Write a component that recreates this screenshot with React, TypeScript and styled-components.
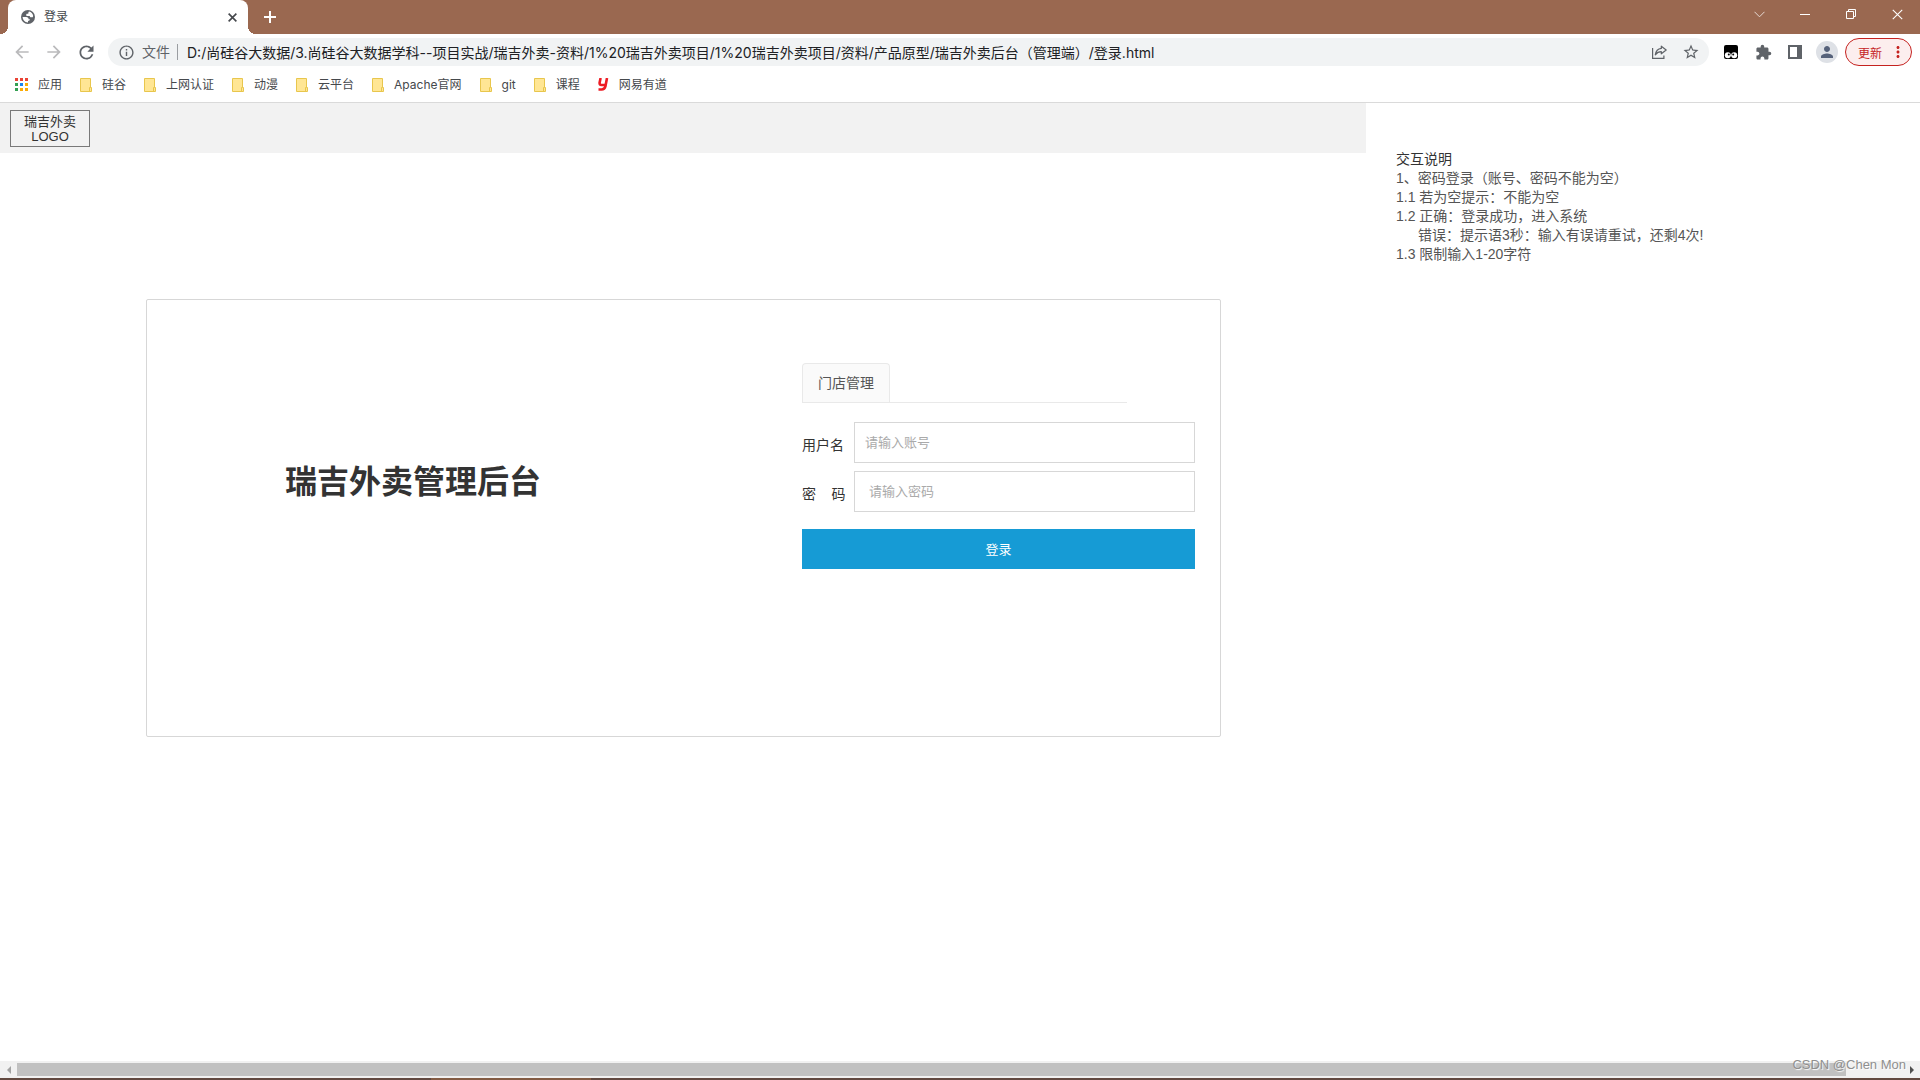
import React from "react";
import styled, { createGlobalStyle } from "styled-components";
import { MdArrowBack, MdArrowForward, MdRefresh, MdStarBorder, MdExtension, MdPerson, MdInfoOutline, MdMoreVert } from "react-icons/md";

const UI_FONT = 'Inter, "Noto Sans CJK SC", sans-serif';
const PAGE_FONT = '"Liberation Sans", "Noto Sans CJK SC", sans-serif';

const GlobalStyle = createGlobalStyle`
  *, *::before, *::after { box-sizing: border-box; }
  body { margin: 0; background: #fff; font-family: ${UI_FONT}; overflow: hidden; }
  button, input { font: inherit; color: inherit; }
  button { border: 0; padding: 0; background: none; cursor: pointer; }
  p, h1, h2 { margin: 0; }
`;

const Browser = styled.div`
  display: flex;
  flex-direction: column;
  min-height: 100vh;
`;

const TitleBar = styled.header`
  display: flex;
  height: 34px;
  background: #9a6850;
`;

const Tab = styled.div`
  position: relative;
  display: flex;
  align-items: center;
  gap: 8px;
  width: 240px;
  height: 34px;
  margin-left: 8px;
  padding: 0 8px 0 12px;
  border-radius: 8px 8px 0 0;
  background: #fff;
  color: #45484c;
  font-size: 12px;

  &::before, &::after {
    content: "";
    position: absolute;
    bottom: 0;
    width: 8px;
    height: 8px;
  }
  &::before {
    left: -8px;
    background: radial-gradient(circle at 0 0, transparent 8px, #fff 8px);
  }
  &::after {
    right: -8px;
    background: radial-gradient(circle at 100% 0, transparent 8px, #fff 8px);
  }
`;

const TabTitle = styled.span`
  flex: 1;
  line-height: 18px;
`;

const IconButton = styled.button<{ $width?: number; $color?: string }>`
  display: flex;
  flex: none;
  align-items: center;
  justify-content: center;
  width: ${(p) => p.$width ?? 32}px;
  height: 28px;
  color: ${(p) => p.$color ?? "#5f6368"};
`;

const NewTab = styled(IconButton)`
  height: 34px;
  margin-left: 6px;
`;

const WindowControls = styled.div`
  display: flex;
  margin-left: auto;
`;

const Toolbar = styled.div`
  display: flex;
  align-items: center;
  height: 36px;
  padding: 0 8px 0 6px;
`;

const Omnibox = styled.div`
  display: flex;
  flex: 1;
  align-items: center;
  min-width: 0;
  height: 28px;
  margin: 0 6px;
  padding: 0 2px 0 10px;
  border-radius: 14px;
  background: #f1f3f4;
  color: #5f6368;
  font-size: 14px;
`;

const Scheme = styled.span`
  flex: none;
  margin-left: 7px;
  padding-right: 7px;
  border-right: 1px solid #9a9da1;
  line-height: 16px;
`;

const Address = styled.input`
  flex: 1;
  min-width: 0;
  height: 28px;
  padding: 0 0 0 9px;
  border: 0;
  outline: 0;
  background: transparent;
  color: #202124;
`;

const Avatar = styled.span`
  display: flex;
  align-items: center;
  justify-content: center;
  width: 22px;
  height: 22px;
  border-radius: 50%;
  background: #dee1e6;
  color: #56627a;
`;

const UpdateButton = styled.button`
  display: flex;
  align-items: center;
  justify-content: space-between;
  width: 67px;
  height: 28px;
  margin-left: 2px;
  padding: 0 4px 0 12px;
  border: 1px solid #c5221f;
  border-radius: 14px;
  background: #fceeee;
  color: #c5221f;
  font-size: 12px;
`;

const Bookmarks = styled.nav`
  display: flex;
  align-items: center;
  gap: 18px;
  height: 33px;
  padding: 0 15px 3px;
  border-bottom: 1px solid #dadada;
`;

const Bookmark = styled.a`
  display: flex;
  align-items: center;
  gap: 10px;
  color: #45484c;
  font-size: 12px;
  line-height: 18px;
  text-decoration: none;
`;

const Viewport = styled.main`
  display: grid;
  flex: 1;
  grid-template-columns: 683fr 277fr;
  color: #333;
  font-family: ${PAGE_FONT};
  font-size: 14px;
`;

const PageHeader = styled.header`
  height: 50px;
  padding: 7px 10px;
  background: #f2f2f2;
`;

const Logo = styled.div`
  width: 80px;
  height: 37px;
  padding: 3px 12px;
  border: 1px solid #797979;
  font-size: 13px;
  line-height: 15px;
  text-align: center;
`;

const LoginCard = styled.section`
  display: flex;
  min-height: 438px;
  margin: 146px 145px 0 146px;
  border: 1px solid #d7d7d7;
  border-radius: 2px;
`;

const Brand = styled.h1`
  flex: 1;
  padding: 158px 0 0 138px;
  font-size: 32px;
  line-height: 48px;
  font-weight: 700;
`;

const LoginForm = styled.form`
  display: flex;
  flex-direction: column;
  width: 418px;
  padding: 63px 25px 0 0;
`;

const TabList = styled.div`
  display: flex;
  width: 325px;
  margin-bottom: 19px;
  border-bottom: 1px solid #e9e9e9;
`;

const FormTab = styled.button`
  width: 88px;
  height: 39px;
  padding-bottom: 2px;
  border: 1px solid #e9e9e9;
  border-bottom: 0;
  border-radius: 4px 4px 0 0;
  background: #fafafa;
  color: #555;
`;

const Field = styled.div`
  display: flex;
  align-items: center;
  margin-bottom: 8px;
`;

const FieldLabel = styled.label`
  width: 52px;
  padding-top: 4px;
  line-height: 20px;
  white-space: pre;
`;

const TextInput = styled.input<{ $indent: number }>`
  flex: 1;
  min-width: 0;
  height: 41px;
  padding: 0 10px 0 ${(p) => p.$indent}px;
  border: 1px solid #d7d7d7;
  background: #fff;
  font-size: 13px;

  &::placeholder { color: #aaa; opacity: 1; }
`;

const Submit = styled.button`
  height: 40px;
  margin-top: 9px;
  padding-bottom: 2px;
  background: #169bd5;
  color: #fff;
  font-size: 13px;
`;

const Notes = styled.aside`
  padding: 47px 30px;
  color: #555;
  line-height: 19px;
`;

const NotesTitle = styled.h2`
  color: #333;
  font-size: 14px;
  font-weight: 400;
`;

const Note = styled.p<{ $nested?: boolean }>`
  padding-left: ${(p) => (p.$nested ? 22 : 0)}px;
`;

const ScrollBar = styled.div`
  position: relative;
  display: flex;
  align-items: center;
  height: 17px;
  background: #f1f1f1;
`;

const ScrollArrow = styled.span<{ $side: "left" | "right" }>`
  flex: none;
  width: 17px;
  &::before {
    content: "";
    display: block;
    width: 4px;
    margin: 0 auto;
    border: 4px solid transparent;
    border-${(p) => (p.$side === "left" ? "right" : "left")}-color: ${(p) => (p.$side === "left" ? "#a3a3a3" : "#505050")};
    border-${(p) => p.$side}-width: 0;
  }
`;

const ScrollTrack = styled.div`
  flex: 1;
`;

const ScrollThumb = styled.div`
  width: 97%;
  height: 13px;
  background: #c1c1c1;
`;

const Watermark = styled.span`
  position: absolute;
  right: 14px;
  bottom: 4px;
  color: #8f8f8f;
  font-family: "Liberation Sans", sans-serif;
  font-size: 13px;
  line-height: 18px;
  text-shadow: 1px 1px 1px #fff;
`;

const Taskbar = styled.footer`
  display: flex;
  height: 2px;
  padding-left: 431px;
  background: #624940;
`;

const ActiveTask = styled.span`
  width: 160px;
  background: #835b43;
`;

const GlobeIcon = () => (
  <svg width="16" height="16" viewBox="0 0 16 16" aria-hidden="true">
    <circle cx="8" cy="8" r="7" fill="#5f6368" />
    <path d="M9.200 2.600c1.900.5 3.600 2.200 4 4.300l-.5 1.300H11c-.8 0-1.200-.6-1.200-1.300H7.200c-.6 0-1-.4-1-1s.4-1.100 1-1.100h1.100c0-1 .1-1.800.9-2.200z" fill="#fff" />
    <path d="M2.600 8h3.700c1.500 0 2.300 1 2.300 2.200h1.300c0 1.200-.9 1.700-1.900 1.700v1.500c-3-.1-5.300-2.500-5.400-5.400z" fill="#fff" />
  </svg>
);

const AppsIcon = () => (
  <svg width="13" height="13" viewBox="0 0 13 13" aria-hidden="true">
    {["#ea4335", "#ea4335", "#ea4335", "#34a053", "#1a84f0", "#fbab05", "#34a053", "#fbab05", "#fbab05"].map((fill, i) => (
      <rect key={i} x={(i % 3) * 5} y={Math.floor(i / 3) * 5} width="3" height="3" fill={fill} />
    ))}
  </svg>
);

const FolderIcon = () => (
  <svg width="12" height="14" viewBox="0 0 12 14" aria-hidden="true">
    <path d="M.5.5h10v9h1v4H.5z" fill="#ffe694" stroke="#e8c64d" />
    <path d="M9.5 13V9.5h1" fill="none" stroke="#e8c64d" />
  </svg>
);

const YoudaoIcon = () => (
  <svg width="11" height="13" viewBox="0 0 11 13" aria-hidden="true">
    <path d="M2.600 0 1.600 4.600Q1.400 7 3.400 7H7" fill="none" stroke="#ed1c24" strokeWidth="2.600" />
    <path d="M9 0 7.400 8.400Q6.600 11.400 3.600 11.500H.5" fill="none" stroke="#ed1c24" strokeWidth="2.600" />
  </svg>
);

const CloseIcon = ({ size, weight }: { size: number; weight: number }) => (
  <svg width={size} height={size} viewBox="0 0 10 10" fill="none" stroke="currentColor" strokeWidth={weight} aria-hidden="true">
    <path d="m.7.7 8.600 8.600m0-8.600L.7 9.300" />
  </svg>
);

const PlusIcon = () => (
  <svg width="12" height="12" viewBox="0 0 12 12" stroke="#fff" strokeWidth="2" aria-hidden="true">
    <path d="M6 0v12M0 6h12" />
  </svg>
);

const ChevronIcon = () => (
  <svg width="11" height="7" viewBox="0 0 11 7" fill="none" stroke="currentColor" aria-hidden="true">
    <path d="m.5.8 5 5 5-5" />
  </svg>
);

const MinimizeIcon = () => (
  <svg width="10" height="1" viewBox="0 0 10 1" fill="currentColor" aria-hidden="true">
    <path d="M0 0h10v1H0z" />
  </svg>
);

const RestoreIcon = () => (
  <svg width="10" height="10" viewBox="0 0 10 10" fill="none" stroke="currentColor" aria-hidden="true">
    <path d="M.5 2.500h7v7h-7zM2.500 2V.5h7v7H8" />
  </svg>
);

const ShareIcon = () => (
  <svg width="15" height="14" viewBox="0 0 15 14" fill="none" stroke="currentColor" strokeWidth="1.200" aria-hidden="true">
    <path d="M.6 3v10.400h11.300v-3" />
    <path d="M9.300 1.200 14.200 5 9.300 8.800V6.700C6.800 6.700 5 7.600 3.300 9.800 3.800 6.400 5.700 3.900 9.300 3.400z" strokeLinejoin="round" />
  </svg>
);

const TampermonkeyIcon = () => (
  <svg width="14" height="14" viewBox="0 0 14 14" aria-hidden="true">
    <rect width="14" height="14" rx="2" fill="#000" />
    <circle cx="3.800" cy="10.300" r="3" fill="#fff" />
    <circle cx="10.200" cy="10.300" r="3" fill="#fff" />
    <circle cx="4.800" cy="9.500" r="1" fill="#000" />
    <circle cx="9.200" cy="9.500" r="1" fill="#000" />
  </svg>
);

const SidePanelIcon = () => (
  <svg width="14" height="14" viewBox="0 0 14 14" aria-hidden="true">
    <path d="M0 0h14v14H0zM2 2v10h7V2z" fill="currentColor" fillRule="evenodd" />
  </svg>
);

const bookmarks = ["硅谷", "上网认证", "动漫", "云平台", "Apache官网", "git", "课程"];

const notes = [
  { text: "1、密码登录（账号、密码不能为空）" },
  { text: "1.1 若为空提示：不能为空" },
  { text: "1.2 正确：登录成功，进入系统" },
  { text: "错误：提示语3秒：输入有误请重试，还剩4次!", nested: true },
  { text: "1.3 限制输入1-20字符" },
];

export default function App() {
  return (
    <Browser>
      <GlobalStyle />
      <TitleBar>
        <Tab>
          <GlobeIcon />
          <TabTitle>登录</TabTitle>
          <IconButton $width={16} $color="#45484c" aria-label="关闭标签页">
            <CloseIcon size={9} weight={1.8} />
          </IconButton>
        </Tab>
        <NewTab aria-label="新标签页"><PlusIcon /></NewTab>
        <WindowControls>
          <IconButton $width={46} $color="#e6d9d3" aria-label="搜索标签页"><ChevronIcon /></IconButton>
          <IconButton $width={46} $color="#fff" aria-label="最小化"><MinimizeIcon /></IconButton>
          <IconButton $width={46} $color="#fff" aria-label="还原"><RestoreIcon /></IconButton>
          <IconButton $width={46} $color="#fff" aria-label="关闭"><CloseIcon size={11} weight={1} /></IconButton>
        </WindowControls>
      </TitleBar>
      <Toolbar>
        <IconButton $color="#bababc" aria-label="后退"><MdArrowBack size={20} /></IconButton>
        <IconButton $color="#bababc" aria-label="前进"><MdArrowForward size={20} /></IconButton>
        <IconButton aria-label="重新加载"><MdRefresh size={21} /></IconButton>
        <Omnibox>
          <MdInfoOutline size={17} />
          <Scheme>文件</Scheme>
          <Address
            aria-label="地址栏"
            defaultValue="D:/尚硅谷大数据/3.尚硅谷大数据学科--项目实战/瑞吉外卖-资料/1%20瑞吉外卖项目/1%20瑞吉外卖项目/资料/产品原型/瑞吉外卖后台（管理端）/登录.html"
          />
          <IconButton aria-label="分享"><ShareIcon /></IconButton>
          <IconButton aria-label="收藏"><MdStarBorder size={18} /></IconButton>
        </Omnibox>
        <IconButton aria-label="篡改猴"><TampermonkeyIcon /></IconButton>
        <IconButton aria-label="扩展程序"><MdExtension size={17} /></IconButton>
        <IconButton aria-label="侧边栏"><SidePanelIcon /></IconButton>
        <IconButton aria-label="用户"><Avatar><MdPerson size={18} /></Avatar></IconButton>
        <UpdateButton>更新<MdMoreVert size={18} /></UpdateButton>
      </Toolbar>
      <Bookmarks>
        <Bookmark href="#"><AppsIcon />应用</Bookmark>
        {bookmarks.map((name) => (
          <Bookmark key={name} href="#"><FolderIcon />{name}</Bookmark>
        ))}
        <Bookmark href="#"><YoudaoIcon />网易有道</Bookmark>
      </Bookmarks>
      <Viewport>
        <div>
          <PageHeader><Logo>瑞吉外卖 LOGO</Logo></PageHeader>
          <LoginCard>
            <Brand>瑞吉外卖管理后台</Brand>
            <LoginForm onSubmit={(e) => e.preventDefault()}>
              <TabList><FormTab type="button">门店管理</FormTab></TabList>
              <Field>
                <FieldLabel htmlFor="account">用户名</FieldLabel>
                <TextInput id="account" $indent={10} placeholder="请输入账号" />
              </Field>
              <Field>
                <FieldLabel htmlFor="password">{"密\u00a0\u00a0\u00a0\u00a0码"}</FieldLabel>
                <TextInput id="password" type="password" $indent={14} placeholder="请输入密码" />
              </Field>
              <Submit>登录</Submit>
            </LoginForm>
          </LoginCard>
        </div>
        <Notes>
          <NotesTitle>交互说明</NotesTitle>
          {notes.map((note) => (
            <Note key={note.text} $nested={note.nested}>{note.text}</Note>
          ))}
        </Notes>
      </Viewport>
      <ScrollBar>
        <ScrollArrow $side="left" />
        <ScrollTrack><ScrollThumb /></ScrollTrack>
        <ScrollArrow $side="right" />
        <Watermark>CSDN @Chen Mon</Watermark>
      </ScrollBar>
      <Taskbar><ActiveTask /></Taskbar>
    </Browser>
  );
}
